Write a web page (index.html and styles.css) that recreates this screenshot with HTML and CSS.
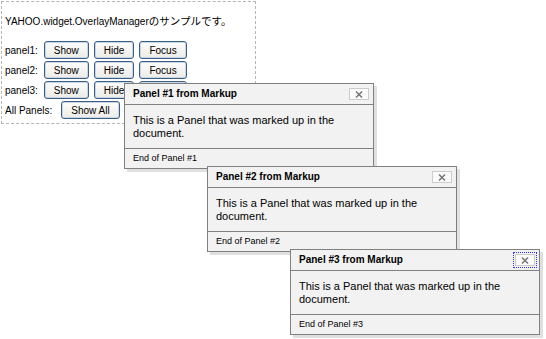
FILE: index.html
```html
<!DOCTYPE html>
<html>
<head>
<meta charset="utf-8">
<link rel="stylesheet" href="styles.css">
</head>
<body>
<div class="box">
  <p class="title">YAHOO.widget.OverlayManager<span class="ja">のサンプルです。</span></p>
  <div class="row"><span class="lbl">panel1:</span><button class="btn">Show</button><button class="btn">Hide</button><button class="btn">Focus</button></div>
  <div class="row"><span class="lbl">panel2:</span><button class="btn">Show</button><button class="btn">Hide</button><button class="btn">Focus</button></div>
  <div class="row"><span class="lbl">panel3:</span><button class="btn">Show</button><button class="btn">Hide</button><button class="btn">Focus</button></div>
  <div class="row"><span class="lbl lbl-all">All Panels:</span><button class="btn">Show All</button></div>
</div>

<div class="panel p1">
  <div class="hd">Panel #1 from Markup<span class="close"><svg width="8" height="7" viewBox="0 0 8 7"><path d="M1 0.5L7 6.5M7 0.5L1 6.5" stroke="#777" stroke-width="1.5"/></svg></span></div>
  <div class="bd">This is a Panel that was marked up in the document.</div>
  <div class="ft">End of Panel #1</div>
</div>
<div class="panel p2">
  <div class="hd">Panel #2 from Markup<span class="close"><svg width="8" height="7" viewBox="0 0 8 7"><path d="M1 0.5L7 6.5M7 0.5L1 6.5" stroke="#777" stroke-width="1.5"/></svg></span></div>
  <div class="bd">This is a Panel that was marked up in the document.</div>
  <div class="ft">End of Panel #2</div>
</div>
<div class="panel p3">
  <div class="hd">Panel #3 from Markup<span class="close focused"><svg width="8" height="7" viewBox="0 0 8 7"><path d="M1 0.5L7 6.5M7 0.5L1 6.5" stroke="#777" stroke-width="1.5"/></svg></span></div>
  <div class="bd">This is a Panel that was marked up in the document.</div>
  <div class="ft">End of Panel #3</div>
</div>
</body>
</html>
```
FILE: styles.css
```css
body {
  margin: 0;
  font-family: "Liberation Sans", Arial, sans-serif;
  color: #000;
  background: #fff;
}
.box {
  box-sizing: border-box;
  width: 255px;
  margin: 1px 0 0 1px;
  border: 1px dashed #b4b4b4;
  padding: 13px 3px 2px;
}
.title {
  margin: 0 0 13px;
  font-size: 10px;
  line-height: 12px;
}
.ja {
  font-family: "Noto Sans CJK JP", sans-serif;
  font-size: 10.5px;
}
.row {
  display: flex;
  align-items: center;
  gap: 5px;
  margin-bottom: 2px;
  font-size: 10px;
}
.lbl {
  margin-right: 1px;
}
.lbl-all {
  margin-right: 4px;
}
.btn {
  box-sizing: border-box;
  height: 18px;
  padding: 0 9px;
  font-family: "Liberation Sans", Arial, sans-serif;
  font-size: 10px;
  color: #000;
  border: 1px solid #3a5e85;
  border-radius: 3px;
  background: linear-gradient(#fdfdfd, #ecebe6);
  box-shadow: inset 0 0 0 1px #c9d6e3;
}
.panel {
  position: absolute;
  box-sizing: border-box;
  width: 250px;
  border: 1px solid #808080;
  background: #f2f2f2;
  box-shadow: 3px 3px 0 rgba(0, 0, 0, 0.12);
}
.p1 { left: 124px; top: 83px; }
.p2 { left: 207px; top: 166px; }
.p3 { left: 290px; top: 249px; }
.hd {
  position: relative;
  height: 20px;
  line-height: 20px;
  padding: 0 8px;
  font-size: 10px;
  font-weight: bold;
  border-bottom: 1px solid #808080;
}
.close {
  position: absolute;
  right: 4px;
  top: 4px;
  box-sizing: border-box;
  width: 20px;
  height: 12px;
  border: 1px solid #cccccc;
  background: #fbfbfb;
  display: flex;
  align-items: center;
  justify-content: center;
}
.close.focused {
  outline: 1px dotted #3030ff;
  outline-offset: 1px;
}
.bd {
  padding: 9px 8px 8px;
  font-size: 11px;
  line-height: 13px;
  border-bottom: 1px solid #808080;
}
.ft {
  height: 19px;
  line-height: 19px;
  padding: 0 8px;
  font-size: 9px;
}
```
